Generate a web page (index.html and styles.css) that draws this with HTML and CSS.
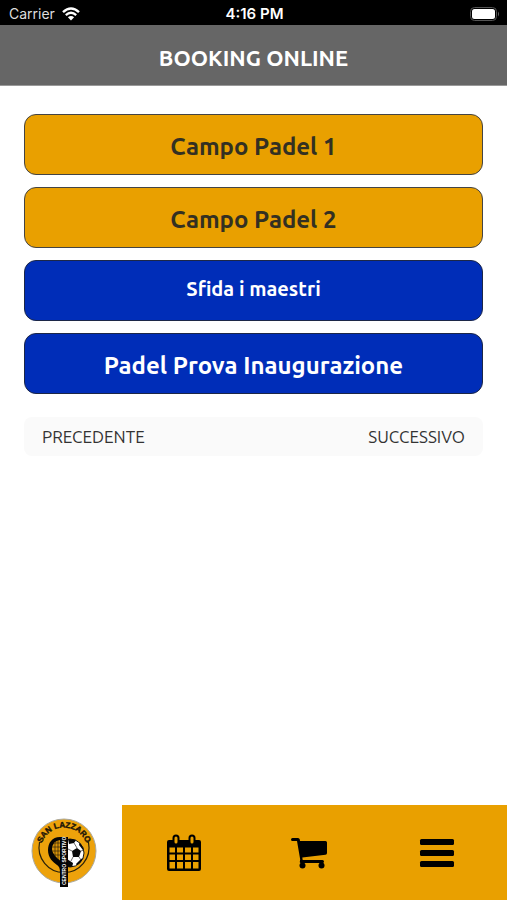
FILE: index.html
```html
<!DOCTYPE html>
<html lang="it">
<head>
<meta charset="utf-8">
<meta name="viewport" content="width=device-width, initial-scale=1">
<title>Booking Online</title>
<link rel="stylesheet" href="styles.css">
</head>
<body>
<div class="status">
  <div class="carrier">
    <span>Carrier</span>
    <svg class="wifi" viewBox="0 0 18 14" aria-hidden="true">
      <path d="M1 5.200Q9-2.400 17 5.200" fill="none" stroke="#fff" stroke-width="2.400"/>
      <path d="M3.800 8.200Q9 3.400 14.200 8.200" fill="none" stroke="#fff" stroke-width="2.300"/>
      <path d="M5.900 10.300Q9 7.700 12.100 10.300L9 13.600Z" fill="#fff"/>
    </svg>
  </div>
  <span class="time">4:16 PM</span>
  <svg class="battery" viewBox="0 0 30 14" aria-label="Batteria">
    <rect x="0.500" y="0.500" width="26" height="13" rx="4" fill="#000" stroke="#555"/>
    <rect x="2" y="2" width="23" height="10" rx="2.500" fill="#fff"/>
    <path d="M28 4.500Q30 7 28 9.500Z" fill="#666"/>
  </svg>
</div>
<header class="header"><h1>BOOKING ONLINE</h1></header>
<main class="content">
  <button class="choice court" type="button">Campo Padel 1</button>
  <button class="choice court" type="button">Campo Padel 2</button>
  <button class="choice event compact" type="button">Sfida i maestri</button>
  <button class="choice event" type="button">Padel Prova Inaugurazione</button>
  <nav class="pager" aria-label="Pagine">
    <a href="#precedente">PRECEDENTE</a>
    <a href="#successivo">SUCCESSIVO</a>
  </nav>
</main>
<nav class="tabs" aria-label="Menu principale">
  <a class="tab home" href="#home" aria-label="Home">
    <svg class="logo" viewBox="0 0 66 70">
      <defs>
        <path id="arc" d="M9.500 33A23.500 23.500 0 0 1 56.500 33"/>
        <clipPath id="ball"><circle cx="39" cy="35" r="14"/></clipPath>
        <clipPath id="net"><path d="M34 22C26 21 21 25 21 31C21 36 27 41 32 45H34Z"/></clipPath>
      </defs>
      <circle cx="33" cy="33" r="32" fill="#eda20b" stroke="#aaa99f"/>
      <path d="M10.500 24L8.500 24.500A25 25 0 1 0 57.500 24.500L55.500 24" fill="none" stroke="#2a2109" stroke-width="1.200"/>
      <circle cx="39" cy="35" r="14" fill="#fff" stroke="#15130c" stroke-width="1"/>
      <g clip-path="url(#ball)" fill="#090909">
        <path d="M41 33L46 30L50 33L48 39L42 39Z"/>
        <path d="M37 21H46L43 25L38 26Z"/>
        <path d="M49 23L55 33L52 32L48 27Z"/>
        <path d="M54 39L47 49L45 46L50 41Z"/>
        <path d="M36 41L42 45L41 50H36Z"/>
        <path d="M43 25L46 30M50 33L53 32M48 39L50 42M42 39L40 43M41 33L37 31" fill="none" stroke="#444" stroke-width="0.800"/>
      </g>
      <path d="M36 19H29C21 19 17 25 17 32C17 40 22 44 26 47C29 49 29 52 29 55H36Z" fill="#050505"/>
      <g clip-path="url(#net)">
        <path d="M20 20H30V44H20Z" fill="#d6930a"/>
        <path d="M24 19V44M27 19V44M19 25H34M19 29H34M19 33H34M19 37H34" stroke="#1c1606" stroke-width="0.600"/>
      </g>
      <rect x="29" y="19" width="8" height="50" fill="#050505"/>
      <text class="crest"><textPath href="#arc" startOffset="50%" text-anchor="middle">SAN LAZZARO</textPath></text>
      <text class="crest-side" transform="translate(35 67) rotate(-90)">CENTRO SPORTIVO</text>
    </svg>
  </a>
  <a class="tab" href="#calendario" aria-label="Calendario">
    <svg class="icon" viewBox="0 0 36 38">
      <path fill-rule="evenodd" d="M3 6H33Q35 6 35 8V35Q35 37 33 37H3Q1 37 1 35V8Q1 6 3 6ZM3.500 13.500V18.500H9V13.500ZM11 13.500V18.500H17V13.500ZM19 13.500V18.500H25V13.500ZM27 13.500V18.500H32.500V13.500ZM3.500 20.500V26H9V20.500ZM11 20.500V26H17V20.500ZM19 20.500V26H25V20.500ZM27 20.500V26H32.500V20.500ZM3.500 28V34.500H9V28ZM11 28V34.500H17V28ZM19 28V34.500H25V28ZM27 28V34.500H32.500V28Z"/>
      <rect x="7.500" y="1.500" width="5" height="9" rx="2.500" fill="#e9a000" stroke="#000" stroke-width="2"/>
      <rect x="23.500" y="1.500" width="5" height="9" rx="2.500" fill="#e9a000" stroke="#000" stroke-width="2"/>
    </svg>
  </a>
  <a class="tab" href="#carrello" aria-label="Carrello">
    <svg class="icon" viewBox="0 0 36 38">
      <path d="M1.500 4H7Q8.500 4 8.800 5.500L9 7H34.500Q36 7 36 8.500V19Q36 20.500 34.500 20.700L11.300 23.400L11.700 26H31.500Q33 26 33 27.500Q33 29 31.500 29H10Q8.500 29 8.800 27.500L9.200 25.500L6 7H1.500Q0 7 0 5.500Q0 4 1.500 4Z"/>
      <circle cx="11.500" cy="31.500" r="3"/>
      <circle cx="30.500" cy="31.500" r="3"/>
    </svg>
  </a>
  <a class="tab" href="#menu" aria-label="Menu">
    <svg class="icon" viewBox="0 0 36 38">
      <rect x="1" y="5" width="34" height="6" rx="1.500"/>
      <rect x="1" y="16" width="34" height="6" rx="1.500"/>
      <rect x="1" y="27" width="34" height="6" rx="1.500"/>
    </svg>
  </a>
</nav>
</body>
</html>
```
FILE: styles.css
```css
* { box-sizing: border-box; }

body {
  margin: 0;
  min-height: 100vh;
  display: flex;
  flex-direction: column;
  background: #fff;
  color: #333;
  font-family: Ubuntu, "Noto Sans", sans-serif;
}

.status {
  display: grid;
  grid-template-columns: 1fr auto 1fr;
  align-items: center;
  height: 25px;
  padding: 2px 7px 0 9px;
  background: #000;
  color: #fff;
  font: 14px/20px Inter, sans-serif;
}

.carrier { display: flex; align-items: center; gap: 7px; color: #ddd; }
.wifi { width: 18px; height: 14px; }
.time { font-size: 15px; font-weight: 600; }
.battery { width: 30px; height: 14px; justify-self: end; }

.header {
  display: flex;
  align-items: center;
  justify-content: center;
  height: 61px;
  padding-top: 6px;
  background: #666;
  border-bottom: 1px solid #999;
  color: #fff;
}

.header h1 { margin: 0; font-size: 22px; line-height: 28px; }

.content {
  flex: 1;
  display: flex;
  flex-direction: column;
  gap: 12px;
  padding: 28px 24px;
}

.choice {
  height: 61px;
  padding: 5px 16px 0;
  border: 1px solid #444;
  border-radius: 12px;
  font-family: inherit;
  font-size: 24px;
  font-weight: 700;
  line-height: 30px;
}

.court { background: #e9a000; color: #333022; }
.event { background: #002db8; border-color: #1c2747; color: #fff; }
.compact { padding: 0 16px 4px; font-size: 20px; }

.pager {
  display: flex;
  align-items: center;
  justify-content: space-between;
  height: 39px;
  margin-top: 11px;
  padding: 0 18px;
  border-radius: 8px;
  background: #fafafa;
  font-size: 17px;
  line-height: 24px;
}

.pager a { color: #333; text-decoration: none; }

.tabs {
  display: grid;
  grid-template-columns: 122fr 124fr 126fr 130fr;
  height: 95px;
  padding-right: 5px;
  background: #e9a000;
}

.tab { display: flex; align-items: center; justify-content: center; }
.home { background: #fff; padding-left: 5px; }
.logo { width: 66px; height: 70px; }
.icon { width: 36px; height: 38px; }

.crest { font: 700 8px "Liberation Sans", sans-serif; fill: #1b1507; stroke: #1b1507; stroke-width: 0.4px; }
.crest-side { font: 700 5px "Liberation Sans", sans-serif; fill: #fff; }
```
